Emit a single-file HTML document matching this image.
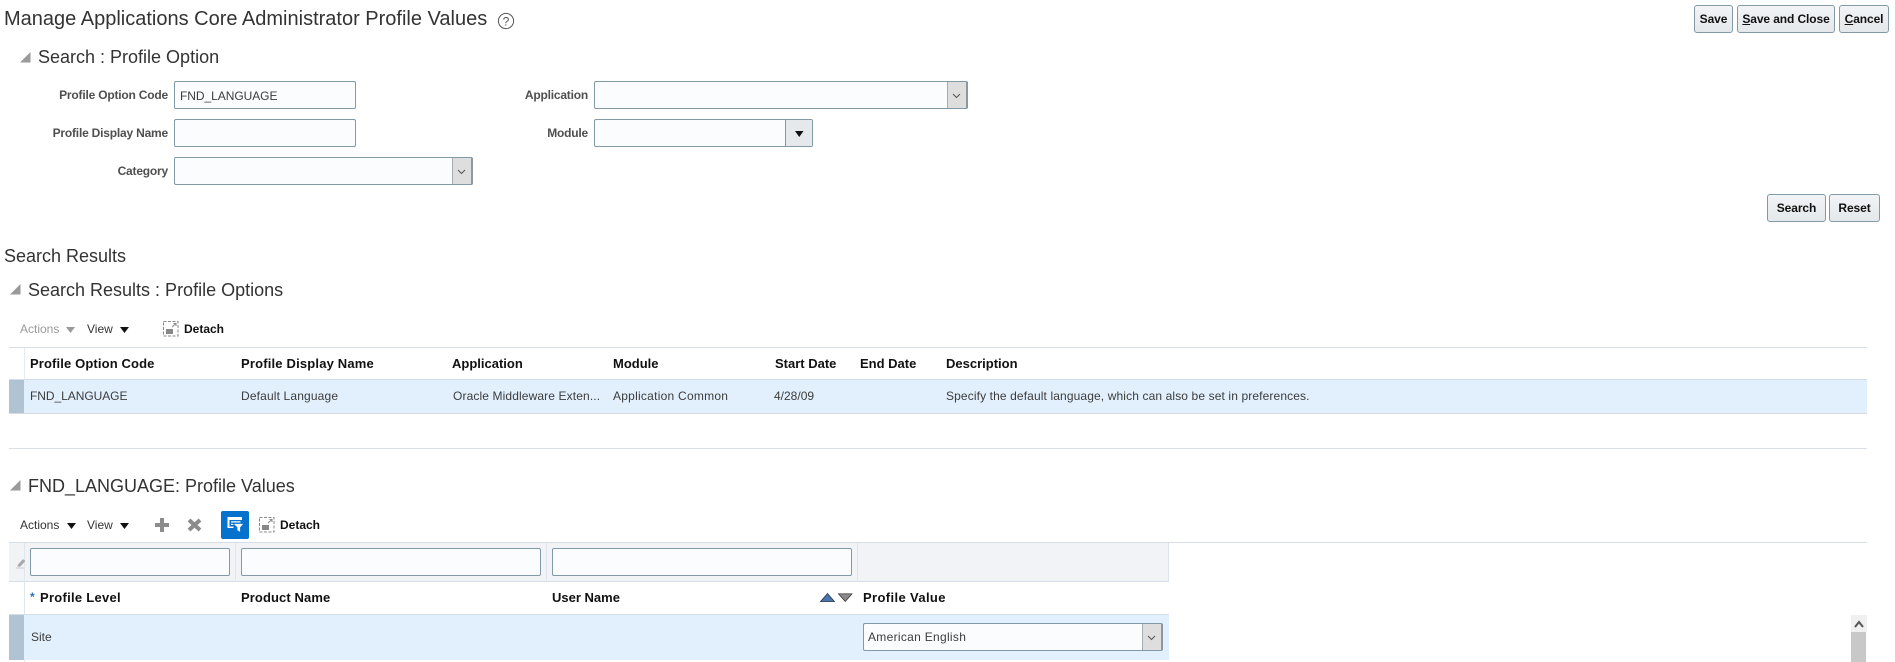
<!DOCTYPE html>
<html><head><meta charset="utf-8"><style>
html,body{margin:0;padding:0;background:#fff;width:1895px;height:662px;overflow:hidden}
body{position:relative;font-family:"Liberation Sans",Arial,sans-serif;color:#333}
.a{position:absolute;box-sizing:border-box}
.t{position:absolute;white-space:nowrap;line-height:20px;height:20px}
.h1{font-size:20px;color:#333;line-height:28px;height:28px}
.h2{font-size:18px;color:#333;line-height:24px;height:24px}
.lb{font-size:12px;font-weight:bold;color:#4f4f4f;text-align:right;letter-spacing:-.2px}
.c{font-size:12px;color:#3c3c3c;letter-spacing:.12px}
.th{font-size:13px;font-weight:bold;color:#111}
.in{position:absolute;box-sizing:border-box;background:#fbfcfe;border:1px solid #8299a8;border-radius:2px;height:28px}
.btn{position:absolute;box-sizing:border-box;height:28px;top:5px;background:linear-gradient(#f2f4f6,#e4e8eb);border:1px solid #8299a8;border-radius:3px;font-size:12px;font-weight:bold;color:#111;text-align:center;line-height:26px;white-space:nowrap;letter-spacing:-.1px}
.dd{position:absolute;right:-1px;top:0;bottom:0;background:#dedede;border-left:1px solid #a4acb2;border-right:2px solid #8d979e}
svg{position:absolute;display:block}
</style></head><body>

<div class="t h1" style="left:4px;top:5px">Manage Applications Core Administrator Profile Values</div>
<svg style="left:497px;top:12px" width="18" height="18" viewBox="0 0 18 18"><circle cx="9" cy="9" r="7.6" fill="none" stroke="#555" stroke-width="1"/><text x="9" y="13.5" font-size="12" text-anchor="middle" fill="#555" font-family="Liberation Sans">?</text></svg>

<div class="btn" style="left:1694px;width:39px">Save</div>
<div class="btn" style="left:1737px;width:98px"><u>S</u>ave and Close</div>
<div class="btn" style="left:1839px;width:50px"><u>C</u>ancel</div>

<svg style="left:20px;top:52px" width="11" height="11"><path d="M0 10.500L10.500 0V10.500Z" fill="#9a9a9a"/></svg>
<div class="t h2" style="left:38px;top:45px">Search : Profile Option</div>

<div class="t lb" style="left:0;width:168px;top:85px">Profile Option Code</div>
<div class="in" style="left:174px;top:81px;width:182px"></div>
<div class="t c" style="left:180px;top:86px;letter-spacing:-.05px">FND_LANGUAGE</div>
<div class="t lb" style="left:0;width:168px;top:123px">Profile Display Name</div>
<div class="in" style="left:174px;top:119px;width:182px"></div>
<div class="t lb" style="left:0;width:168px;top:161px">Category</div>
<div class="in" style="left:174px;top:157px;width:299px"><div class="dd" style="width:18px"><svg style="left:4px;top:11px" width="9" height="6"><path d="M1 1L4.500 4.500L8 1" fill="none" stroke="#555"/></svg></div></div>

<div class="t lb" style="left:400px;width:188px;top:85px">Application</div>
<div class="in" style="left:594px;top:81px;width:374px"><div class="dd" style="width:18px"><svg style="left:4px;top:11px" width="9" height="6"><path d="M1 1L4.500 4.500L8 1" fill="none" stroke="#555"/></svg></div></div>
<div class="t lb" style="left:400px;width:188px;top:123px">Module</div>
<div class="in" style="left:594px;top:119px;width:219px"><div class="a" style="right:0;top:0;bottom:0;width:27px;background:#e6e9ec;border-left:1px solid #8299a8"><svg style="left:9px;top:11px" width="9" height="6"><path d="M0 0H8.500L4.250 6Z" fill="#111"/></svg></div></div>

<div class="btn" style="left:1767px;top:194px;width:59px">Search</div>
<div class="btn" style="left:1829px;top:194px;width:51px">Reset</div>

<div class="t h2" style="left:4px;top:244px">Search Results</div>
<svg style="left:10px;top:284px" width="11" height="11"><path d="M0 10.500L10.500 0V10.500Z" fill="#9a9a9a"/></svg>
<div class="t h2" style="left:28px;top:278px">Search Results : Profile Options</div>

<div class="t c" style="left:20px;top:319px;color:#9a9a9a;letter-spacing:0">Actions</div>
<svg style="left:66px;top:327px" width="9" height="6"><path d="M0 0H9L4.500 6Z" fill="#9a9a9a"/></svg>
<div class="t c" style="left:87px;top:319px;color:#333;letter-spacing:0">View</div>
<svg style="left:120px;top:327px" width="9" height="6"><path d="M0 0H9L4.500 6Z" fill="#111"/></svg>
<svg style="left:163px;top:321px" width="16" height="16"><rect x=".5" y=".5" width="14.500" height="14.500" fill="none" stroke="#888" stroke-dasharray="3 1.500"/><rect x="3" y="8" width="7" height="5" fill="#888"/><path d="M9 6L13 2.500M10.500 2.500H13V5" fill="none" stroke="#888"/></svg>
<div class="t c" style="left:184px;top:319px;font-weight:bold;color:#111;letter-spacing:0">Detach</div>

<div class="a" style="left:9px;top:347px;width:1858px;height:1px;background:#d6dfe8"></div>
<div class="a" style="left:24px;top:348px;width:1px;height:31px;background:#e4ebf1"></div>
<div class="t th" style="left:30px;top:354px;letter-spacing:.13px">Profile Option Code</div>
<div class="t th" style="left:241px;top:354px;letter-spacing:.18px">Profile Display Name</div>
<div class="t th" style="left:452px;top:354px">Application</div>
<div class="t th" style="left:613px;top:354px">Module</div>
<div class="t th" style="left:775px;top:354px">Start Date</div>
<div class="t th" style="left:860px;top:354px">End Date</div>
<div class="t th" style="left:946px;top:354px">Description</div>

<div class="a" style="left:9px;top:379px;width:1858px;height:35px;background:#e2f0fd;border-top:1px solid #d3deea;border-bottom:1px solid #d9dadd"></div>
<div class="a" style="left:9px;top:380px;width:15px;height:33px;background:#afc3d3"></div>
<div class="t c" style="left:30px;top:386px;letter-spacing:-.05px">FND_LANGUAGE</div>
<div class="t c" style="left:241px;top:386px;letter-spacing:.15px">Default Language</div>
<div class="t c" style="left:453px;top:386px">Oracle Middleware Exten...</div>
<div class="t c" style="left:613px;top:386px;letter-spacing:.25px">Application Common</div>
<div class="t c" style="left:774px;top:386px;letter-spacing:0">4/28/09</div>
<div class="t c" style="left:946px;top:386px">Specify the default language, which can also be set in preferences.</div>

<div class="a" style="left:9px;top:448px;width:1858px;height:1px;background:#d9dfe4"></div>

<svg style="left:10px;top:480px" width="11" height="11"><path d="M0 10.500L10.500 0V10.500Z" fill="#9a9a9a"/></svg>
<div class="t h2" style="left:28px;top:474px">FND_LANGUAGE: Profile Values</div>

<div class="t c" style="left:20px;top:515px;color:#333;letter-spacing:0">Actions</div>
<svg style="left:67px;top:523px" width="9" height="6"><path d="M0 0H9L4.500 6Z" fill="#111"/></svg>
<div class="t c" style="left:87px;top:515px;color:#333;letter-spacing:0">View</div>
<svg style="left:120px;top:523px" width="9" height="6"><path d="M0 0H9L4.500 6Z" fill="#111"/></svg>
<svg style="left:155px;top:518px" width="14" height="14"><path d="M5 0H9V5H14V9H9V14H5V9H0V5H5Z" fill="#8c8c8c"/></svg>
<svg style="left:187px;top:518px" width="15" height="14"><path d="M2 2L13 12M13 2L2 12" fill="none" stroke="#8c8c8c" stroke-width="4"/></svg>
<div class="a" style="left:221px;top:511px;width:28px;height:28px;background:#0572ce;border-radius:2px"></div>
<svg style="left:221px;top:511px" width="28" height="28"><path d="M6.500 6H21V9H6.500ZM6.500 9H8.500V17H6.500ZM10 10.200H19.500V11.500H10ZM10 12.800H15V14H10ZM8.500 15.600H12.500V17H8.500Z" fill="#fff"/><path d="M12 12.500H23L19.500 16.500V21.500L16 19.500V16.500Z" fill="#fff" stroke="#0572ce" stroke-width=".8"/></svg>
<svg style="left:259px;top:517px" width="16" height="16"><rect x=".5" y=".5" width="14.500" height="14.500" fill="none" stroke="#888" stroke-dasharray="3 1.500"/><rect x="3" y="8" width="7" height="5" fill="#888"/><path d="M9 6L13 2.500M10.500 2.500H13V5" fill="none" stroke="#888"/></svg>
<div class="t c" style="left:280px;top:515px;font-weight:bold;color:#111;letter-spacing:0">Detach</div>

<div class="a" style="left:9px;top:542px;width:1858px;height:1px;background:#d6dfe8"></div>
<div class="a" style="left:9px;top:543px;width:1160px;height:39px;background:#f1f3f7;border-bottom:1px solid #d6dfe8;border-right:1px solid #dde3ea"></div>
<div class="a" style="left:24px;top:543px;width:1px;height:119px;background:#dfe6ec"></div>
<div class="a" style="left:235px;top:543px;width:1px;height:39px;background:#dfe6ec"></div>
<div class="a" style="left:546px;top:543px;width:1px;height:39px;background:#dfe6ec"></div>
<div class="a" style="left:857px;top:543px;width:1px;height:39px;background:#dfe6ec"></div>
<svg style="left:16px;top:558px" width="9" height="11"><path d="M2 7L7 1.500L9 3L4 8.500H2ZM0 10H8" fill="#aaa" stroke="#aaa" stroke-width=".6"/></svg>
<div class="in" style="left:30px;top:548px;width:200px"></div>
<div class="in" style="left:241px;top:548px;width:300px"></div>
<div class="in" style="left:552px;top:548px;width:300px"></div>

<div class="t" style="left:30px;top:587px;font-size:12px;color:#2a6fc0;font-weight:bold">*</div>
<div class="t th" style="left:40px;top:588px;letter-spacing:.28px">Profile Level</div>
<div class="t th" style="left:241px;top:588px;letter-spacing:.1px">Product Name</div>
<div class="t th" style="left:552px;top:588px">User Name</div>
<svg style="left:820px;top:593px" width="33" height="10"><path d="M7.500 .5L14.500 8.500H.5Z" fill="#4a74ad" stroke="#1f2d3d" stroke-width=".7"/><path d="M18.500 .8H32L25.250 8.500Z" fill="#8a8a8a" stroke="#222" stroke-width=".7"/></svg>
<div class="t th" style="left:863px;top:588px;letter-spacing:.37px">Profile Value</div>

<div class="a" style="left:9px;top:614px;width:1160px;height:46px;background:#e2f0fd;border-top:1px solid #d3deea"></div>
<div class="a" style="left:9px;top:615px;width:15px;height:45px;background:#afc3d3"></div>
<div class="t c" style="left:31px;top:627px;letter-spacing:0">Site</div>
<div class="in" style="left:863px;top:623px;width:300px;height:28px"><div class="dd" style="width:18px"><svg style="left:4px;top:11px" width="9" height="6"><path d="M1 1L4.500 4.500L8 1" fill="none" stroke="#555"/></svg></div></div>
<div class="t c" style="left:868px;top:627px;letter-spacing:.3px">American English</div>

<div class="a" style="left:1851px;top:615px;width:16px;height:17px;background:#f0f0f0"></div>
<svg style="left:1854px;top:620px" width="10" height="8"><path d="M1 7L5 2L9 7" fill="none" stroke="#555" stroke-width="2"/></svg>
<div class="a" style="left:1851px;top:632px;width:15px;height:30px;background:#c8c8c8"></div>

</body></html>
